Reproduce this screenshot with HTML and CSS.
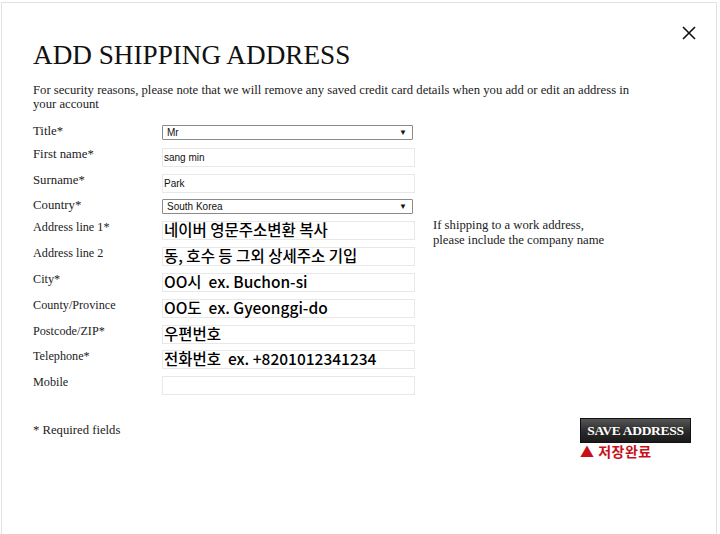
FILE: index.html
```html
<!DOCTYPE html>
<html>
<head>
    <title>Add Shipping Address</title>
    <link rel="stylesheet" href="styles.css">
</head>
<body>
<div class="dialog">
    <a class="close" href="#">
        <svg width="14" height="14" viewBox="0 0 14 14"><path d="M1 1 L13 13 M13 1 L1 13" stroke="#111" stroke-width="1.6" fill="none"/></svg>
    </a>
    <h1 class="heading">ADD SHIPPING ADDRESS</h1>
    <p class="intro">For security reasons, please note that we will remove any saved credit card details when you add or edit an address in your account</p>

    <div class="form">
        <div class="row row-title">
            <label>Title*</label>
            <div class="select">Mr<span class="arrow">&#9660;</span></div>
        </div>
        <div class="row">
            <label>First name*</label>
            <div class="input">sang min</div>
        </div>
        <div class="row row-short">
            <label>Surname*</label>
            <div class="input">Park</div>
        </div>
        <div class="row row-country">
            <label>Country*</label>
            <div class="select">South Korea<span class="arrow">&#9660;</span></div>
        </div>
        <div class="row">
            <label class="small">Address line 1*</label>
            <div class="input big">네이버 영문주소변환 복사</div>
            <p class="help">If shipping to a work address,<br>please include the company name</p>
        </div>
        <div class="row">
            <label class="small">Address line 2</label>
            <div class="input big">동, 호수 등 그외 상세주소 기입</div>
        </div>
        <div class="row">
            <label class="small">City*</label>
            <div class="input big">OO시 &nbsp;ex. Buchon-si</div>
        </div>
        <div class="row">
            <label class="small">County/Province</label>
            <div class="input big">OO도 &nbsp;ex. Gyeonggi-do</div>
        </div>
        <div class="row row-short">
            <label class="small">Postcode/ZIP*</label>
            <div class="input big">우편번호</div>
        </div>
        <div class="row">
            <label class="small">Telephone*</label>
            <div class="input big">전화번호 &nbsp;ex. +8201012341234</div>
        </div>
        <div class="row">
            <label class="small">Mobile</label>
            <div class="input"></div>
        </div>
    </div>

    <div class="footer">
        <span class="required">* Required fields</span>
        <div class="save">
            <button class="save-btn">SAVE ADDRESS</button>
            <div class="note">&#9650; 저장완료</div>
        </div>
    </div>
</div>
</body>
</html>
```

FILE: styles.css
```css
html, body {
    margin: 0px;
    padding: 0px;
    background: #fff;
    overflow: hidden;
}

.dialog {
    position: relative;
    margin: 2px 0px 0px 1px;
    width: 716px;
    height: 540px;
    border: 1px solid #e2e2e2;
    border-bottom: none;
    box-sizing: border-box;
    padding: 0px 0px 0px 31px;
    font-family: "Liberation Serif", "Times New Roman", serif;
    color: #222;
}

.close {
    position: absolute;
    top: 23px;
    right: 20px;
    width: 14px;
    height: 14px;
}

.heading {
    margin: 0px;
    padding-top: 35px;
    font-size: 27.2px;
    font-weight: normal;
    line-height: 34px;
    color: #111;
}

.intro {
    margin: 11px 0px 0px 0px;
    width: 604px;
    font-size: 12.7px;
    line-height: 14px;
}

.form {
    margin-top: 14px;
}

.row {
    display: flex;
    align-items: flex-start;
    height: 26px;
}
.row-title {
    height: 23px;
}
.row-short {
    height: 25px;
}
.row-country {
    height: 22px;
}

.row label {
    width: 129px;
    margin-top: -1px;
    font-size: 12.8px;
    line-height: 14px;
}
.row label.small {
    font-size: 12.2px;
}

.select {
    position: relative;
    width: 245px;
    height: 13px;
    border: 1px solid #8a8a8a;
    border-radius: 1px;
    padding-left: 4px;
    font-family: "Liberation Sans", Arial, sans-serif;
    font-size: 10px;
    line-height: 13px;
    color: #111;
}
.select .arrow {
    position: absolute;
    right: 5px;
    top: 0px;
    font-size: 8px;
}

.input {
    width: 250px;
    height: 17px;
    border: 1px solid #e8e8e8;
    padding-left: 1px;
    font-family: "Liberation Sans", Arial, sans-serif;
    font-size: 10px;
    line-height: 18px;
    color: #111;
    white-space: nowrap;
}
.input.big {
    font-family: "Noto Sans CJK KR", "Noto Sans", sans-serif;
    font-size: 15.5px;
    font-weight: 500;
    line-height: 15px;
    color: #000;
}

.help {
    margin: -3px 0px 0px 18px;
    font-size: 12.7px;
    line-height: 15px;
}

.footer {
    display: flex;
    justify-content: space-between;
    align-items: flex-start;
    width: 658px;
    margin-top: 16px;
}

.required {
    font-size: 12.7px;
    margin-top: 5px;
}

.save-btn {
    display: block;
    width: 111px;
    height: 25px;
    border: 1px solid #111;
    background: linear-gradient(#555, #2a2a2a 55%, #1a1a1a);
    color: #fff;
    font-family: "Liberation Serif", "Times New Roman", serif;
    font-size: 13.5px;
    font-weight: bold;
    letter-spacing: -0.3px;
    padding: 0px;
}

.note {
    margin-top: 0px;
    font-family: "Noto Sans CJK KR", sans-serif;
    font-size: 14px;
    font-weight: bold;
    line-height: 17px;
    letter-spacing: 0.5px;
    color: #c8101a;
}
```
